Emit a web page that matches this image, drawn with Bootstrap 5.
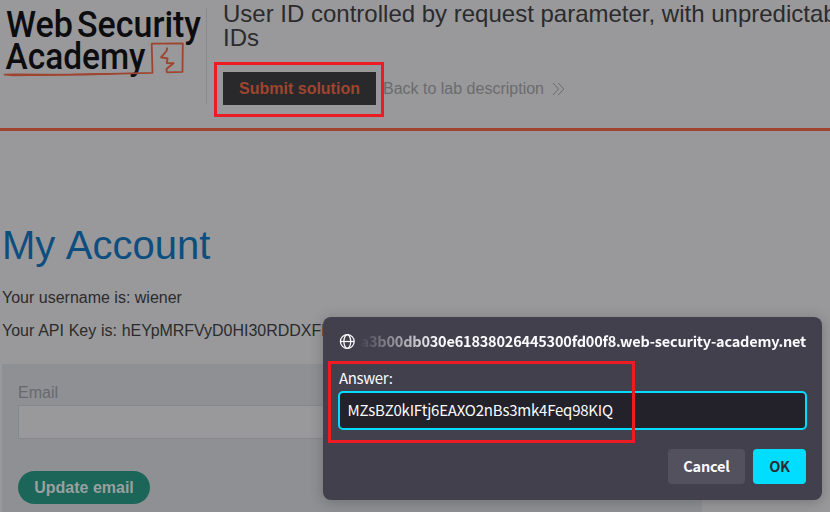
<!DOCTYPE html>
<html lang="en">
<head>
<meta charset="utf-8">
<meta name="viewport" content="width=device-width, initial-scale=1">
<title>Web Security Academy - My Account</title>
<link href="https://cdn.jsdelivr.net/npm/bootstrap@5.3.0/dist/css/bootstrap.min.css" rel="stylesheet">
<style>
  html, body { height: 512px; overflow: hidden; }
  body { background: #99999b; color: #2b2b2d; font: 16px/20px "Liberation Sans", Arial, sans-serif; }
  .lab-header { height: 131px; border-bottom: 3px solid #9f452f; }
  .brand { width: 207px; height: 96px; margin-top: 8px; border-right: 1px solid #8b8b8d; }
  .brand svg { margin-top: -8px; }
  .lab-info { width: 623px; overflow: hidden; padding-left: 16px; padding-top: 2px; }
  .lab-title { font-size: 24px; line-height: 24px; font-weight: 400; margin: 0; color: #2b2b2d; white-space: nowrap; }
  .btn-submit { width: 153px; height: 33px; padding: 0; border: 0; border-radius: 0; font-weight: 700; }
  .btn-submit, .btn-submit:hover { background: #29292b; color: #9f452f; }
  .actions { margin-top: 22px; }
  .back { color: #6b6b6d; margin-left: 7px; }
  .account { height: 381px; overflow: hidden; padding: 90px 0 0 2px; }
  .account h1 { font-size: 40px; line-height: 48px; font-weight: 400; color: #0e4e7f; margin: 0 0 19px; word-spacing: 1.5px; }
  .account p { margin: 0 0 13px; white-space: nowrap; }
  .account .api-key { word-spacing: .4px; letter-spacing: -.03px; }
  .email-form { width: 700px; height: 148px; margin-top: 23px; padding: 19px 16px 0; background: #8f9094; }
  .email-form label { color: #68696c; display: block; line-height: 20px; }
  .email-form .form-control { height: 34px; margin-top: 2px; border: 1px solid #87888b; border-radius: 0; background: #99999b; }
  .btn-update, .btn-update:hover { width: 132px; height: 33px; margin-top: 32px; padding: 0; border: 0; border-radius: 17px; background: #1c6659; color: #99a09f; font-weight: 700; }
  .prompt { position: absolute; left: 323px; top: 317px; width: 499px; height: 183px; padding: 16px; border-radius: 8px; background: #42404d; color: #fbfbfe; font: 15px/20px "Noto Sans CJK SC", "Noto Sans", sans-serif; box-shadow: 0 2px 14px rgba(28,27,34,.28); }
  .origin { height: 18px; font-weight: 700; font-size: 14.5px; line-height: 16px; letter-spacing: -.2px; }
  .host { width: 447px; height: 18px; overflow: hidden; white-space: nowrap; -webkit-mask-image: linear-gradient(to right, transparent, #000 80px); mask-image: linear-gradient(to right, transparent, #000 80px); }
  .answer { margin: 17px 0 3px; font-size: 15px; line-height: 20px; letter-spacing: -.35px; }
  .prompt .form-control { width: 469px; height: 39px; margin: 0 0 0 -1px; padding: 0 7.5px 2px; border: 2px solid #00ddff; border-radius: 5px; background: #23222b; color: #fbfbfe; font-size: 15px; letter-spacing: -.22px; box-shadow: none; }
  .choices { margin-top: 19px; }
  .choices .btn { height: 35px; padding: 0 0 2px; border: 0; border-radius: 4px; font-size: 14.5px; font-weight: 700; letter-spacing: -.2px; }
  .btn-cancel, .btn-cancel:hover { width: 77px; background: #53515d; color: #fbfbfe; }
  .btn-ok, .btn-ok:hover { width: 53px; background: #00ddff; color: #2b2a33; }
  .highlight { position: absolute; border: 3px solid #ed1c24; pointer-events: none; }
  .highlight-submit { left: 214px; top: 62px; width: 170px; height: 55px; }
  .highlight-answer { left: 328px; top: 361px; width: 307px; height: 82px; }
</style>
<script defer src="https://cdn.jsdelivr.net/npm/bootstrap@5.3.0/dist/js/bootstrap.bundle.min.js"></script>
</head>
<body>
<header class="lab-header d-flex">
  <div class="brand flex-shrink-0">
    <svg class="d-block" width="206" height="88" viewBox="0 0 206 88" role="img" aria-label="Web Security Academy">
      <g fill="#0d0d10" font-family="Roboto, sans-serif" font-weight="500" font-size="37">
        <text x="6" y="36.5" textLength="67" lengthAdjust="spacingAndGlyphs">Web</text>
        <text x="77" y="36.5" textLength="124" lengthAdjust="spacingAndGlyphs">Security</text>
        <text x="5.5" y="69" textLength="140" lengthAdjust="spacingAndGlyphs">Academy</text>
      </g>
      <g fill="none" stroke="#9f452f" stroke-linejoin="round">
        <path stroke-width="1.8" d="M4 74.7 L30 75.2 L90 74.4 L130 73.4 L152.5 72.8 L151.7 43.6 L182.8 43.4 L182.5 71.8 L166.5 72.4"/>
        <path stroke-width="1.9" d="M167.2 47.5 L166.5 51 L161 57.3 L167.5 58.5 L166.8 63 L173.5 63.3 L166.5 69 L166.8 72.4"/>
      </g>
      <path fill="#9f452f" d="M2.5 74.2 L14 73.6 L70 74 L100 73 L130 73.6 L100 75 L12 76.2Z"/>
    </svg>
  </div>
  <div class="lab-info">
    <h2 class="lab-title">User ID controlled by request parameter, with unpredictable<br>IDs</h2>
    <div class="actions d-flex align-items-center">
      <button class="btn btn-submit">Submit solution</button>
      <a class="back text-decoration-none d-flex align-items-center" href="#">Back to lab description
        <svg class="ms-2" width="13" height="14" viewBox="0 0 13 14" fill="none" stroke="#6b6b6d" stroke-width="1"><path d="M1 1 L6.5 7 L1 13 M6.2 1 L11.8 7 L6.2 13"/></svg>
      </a>
    </div>
  </div>
</header>
<main class="account">
  <h1>My Account</h1>
  <p>Your username is: wiener</p>
  <p class="api-key">Your API Key is: hEYpMRFVyD0HI30RDDXFI</p>
  <form class="email-form">
    <label for="email">Email</label>
    <input id="email" type="email" class="form-control">
    <button type="button" class="btn btn-update">Update email</button>
  </form>
</main>
<section class="prompt" role="dialog" aria-label="Answer">
  <div class="origin d-flex justify-content-between align-items-center">
    <svg width="16" height="16" viewBox="0 0 16 16" fill="none" stroke="#fbfbfe" stroke-width="1.25"><circle cx="8.3" cy="7.5" r="6.9"/><ellipse cx="8.3" cy="7.5" rx="3.4" ry="6.9"/><path d="M1.5 7.5H15"/></svg>
    <div class="host d-flex justify-content-end"><span>a3b00db030e61838026445300fd00f8.web-security-academy.net</span></div>
  </div>
  <div class="answer">Answer:</div>
  <input class="form-control" type="text" value="MZsBZ0kIFtj6EAXO2nBs3mk4Feq98KIQ" aria-label="Answer">
  <div class="choices d-flex justify-content-end gap-2">
    <button class="btn btn-cancel">Cancel</button>
    <button class="btn btn-ok">OK</button>
  </div>
</section>
<div class="highlight highlight-submit"></div>
<div class="highlight highlight-answer"></div>
</body>
</html>
